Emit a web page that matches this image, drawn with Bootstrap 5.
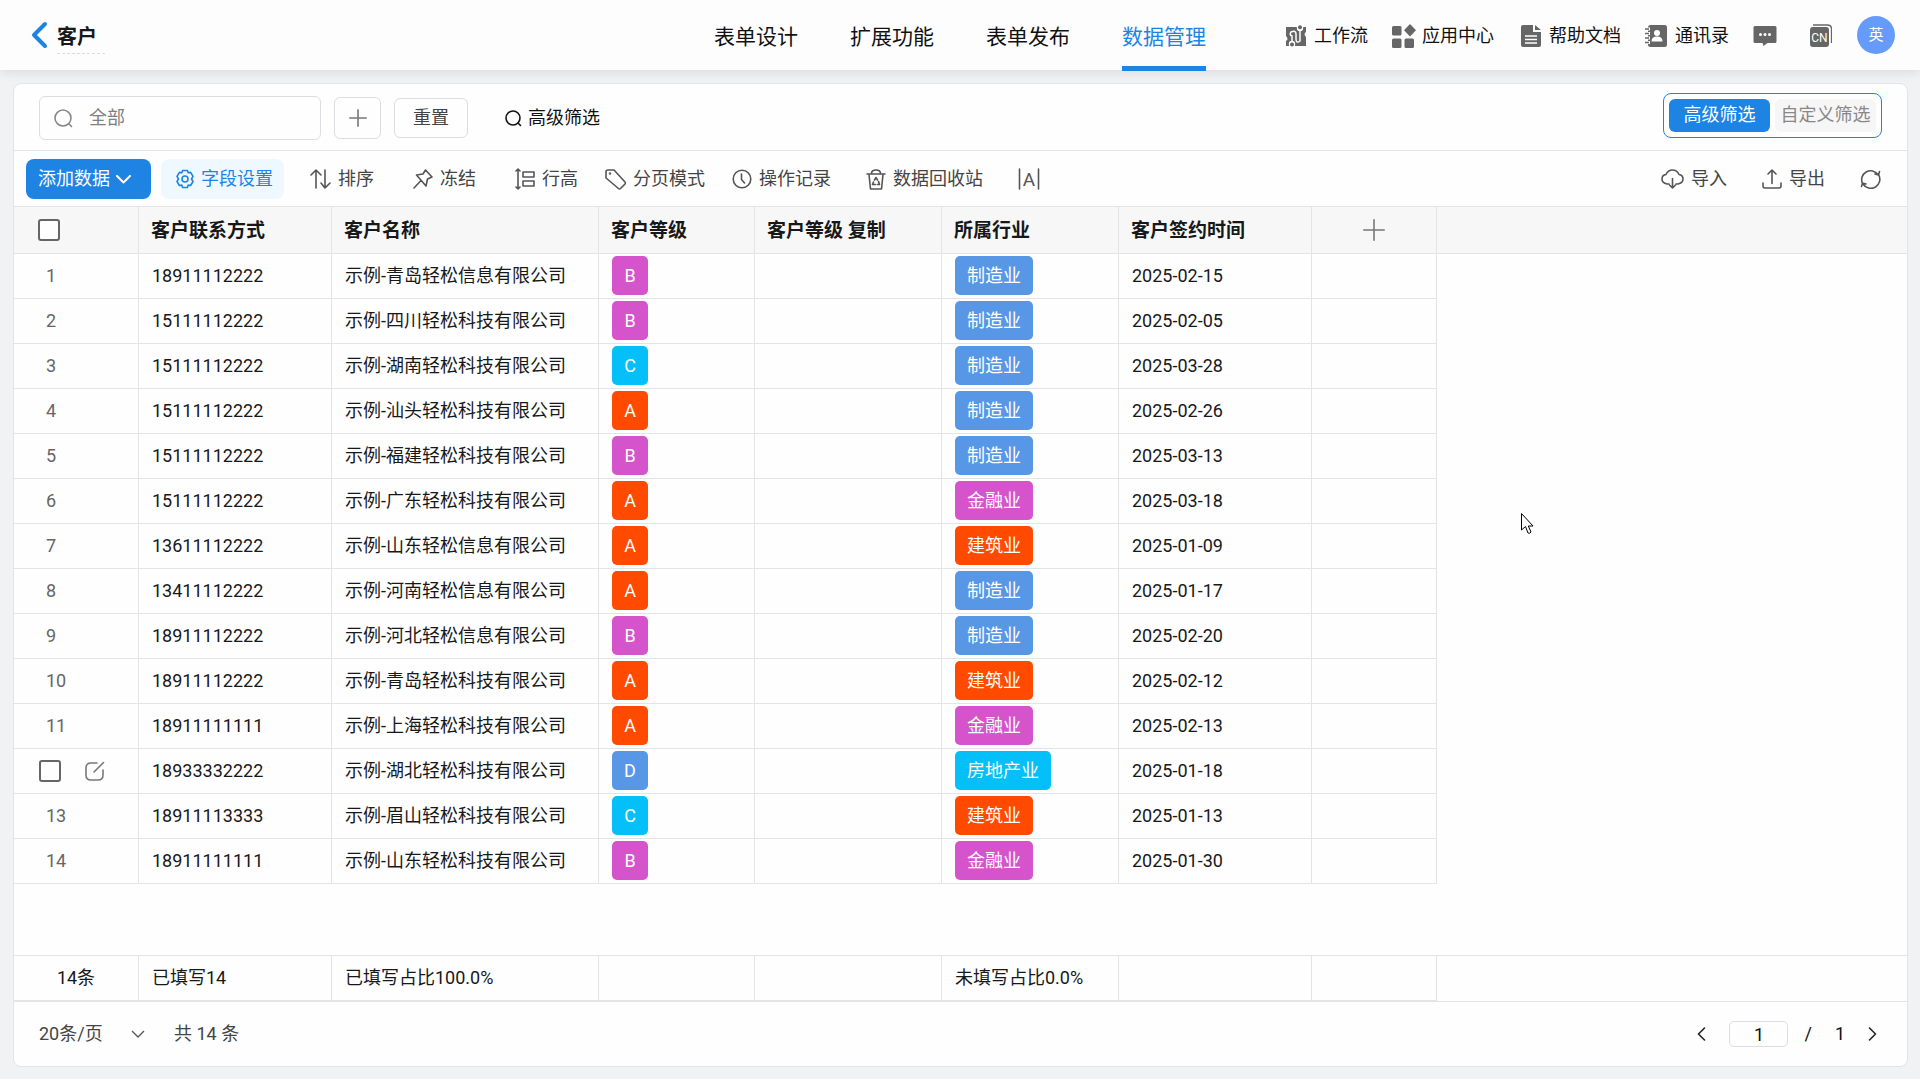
<!DOCTYPE html>
<html lang="zh-CN">
<head>
<meta charset="utf-8">
<meta name="viewport" content="width=device-width, initial-scale=1">
<title>客户 - 数据管理</title>
<link href="https://cdn.jsdelivr.net/npm/bootstrap@5.3.0/dist/css/bootstrap.min.css" rel="stylesheet">
<style>
:root{--brand:#1e84e4;--rule:#e3e4e6;--ink:#17181a;--soft:#444}
body{background:#f1f2f4;color:var(--ink);font-family:Roboto,"Noto Sans CJK SC",sans-serif;font-size:18px;line-height:24px}
button{white-space:nowrap}
svg{display:block;flex:none}
.ln{fill:none;stroke:currentColor;stroke-width:1.6;stroke-linecap:round;stroke-linejoin:round}
.ln-back{stroke-width:4}.ln-caret{stroke-width:2}
.topbar{height:70px;background:#fdfdfe;box-shadow:0 1px 12px rgba(0,0,0,.12);padding:0 25px;position:relative}
.side{flex:1 1 0;min-width:0}
.back-link{color:var(--brand);margin:0 9px 0 6px}
.form-title{font-size:20px;font-weight:700;padding:6px 8px 2px 0;margin:0;line-height:28px;border-bottom:1px dashed #dcdcdc}
.tabs-main{gap:52px}
.tabs-main a{font-size:21px;line-height:30px;padding:22px 0 14px;color:#111;text-decoration:none;border-bottom:5px solid transparent;margin-bottom:-1px;white-space:nowrap}
.tabs-main a.active{color:var(--brand);border-color:var(--brand)}
.quick{color:#111;text-decoration:none;display:flex;align-items:center;gap:8px;white-space:nowrap;padding-top:2px}
.quick.apps{gap:6px;margin-right:27px}
.quick svg,.top-ico svg{color:#666}
.top-ico{border:0;background:none;padding:2px 0 0}
.top-ico.msg{margin-right:33px}.top-ico.lang{margin-right:25px}
.avatar{width:38px;height:38px;border-radius:50%;background:#659bfb;color:#fff;font-size:15px;border:0;padding:0}
.main-area{padding:13px 12px 12px 13px}
.panel{background:#fefefe;border:1px solid var(--rule);border-radius:8px}
.filter-row{padding:9px 25px 10px;min-height:67px;border-bottom:1px solid var(--rule)}
.filter-left{gap:13px;margin-top:3px}
.search-wrap{width:282px;height:44px;border:1px solid #dcdde3;border-radius:6px;padding:0 14px;gap:16px;color:#888}
.search-wrap input{border:0;background:none;outline:0;width:200px;padding:0;color:#111}
.search-wrap input::placeholder{color:#808080;opacity:1}
.btn-line{border:1px solid #dcdde3;border-radius:6px;background:#fefefe;color:var(--soft);height:40px;padding:0 18px}
.btn-plus{width:47px;height:42px;padding:0;color:#777}
.btn-adv{border:0;background:none;padding:0;color:#111;gap:6px;margin-left:24px}
.switcher{border:1px solid var(--brand);border-radius:8px;padding:5px;gap:5px;height:45px}
.switcher button{border:0;border-radius:6px;width:101px;height:33px;padding:0 0 1px;background:#f6f6f6;color:#888}
.switcher button.active{background:var(--brand);color:#fff}
.tool-row{padding:8px 26px 7px 12px;border-bottom:1px solid var(--rule);color:var(--soft)}
.tool{border:0;background:none;color:var(--soft);padding:0;display:flex;align-items:center;gap:7px;height:40px}
.tool-row .tool svg{color:#555}
.tool.add{background:var(--brand);color:#fff;border-radius:8px;width:125px;padding:0 0 0 12px;margin-right:10px;gap:6px}
.tool-row .tool.add svg{color:#fff}
.tool.field{background:#f0f8ff;color:var(--brand);border-radius:8px;width:123px;padding:0 0 0 14px;margin-right:26px;gap:6px}
.tool-row .tool.field svg{color:var(--brand)}
.far{margin-right:39px}.mid{margin-right:35px}.near{margin-right:27px}
.grid{width:100%;table-layout:fixed;border-collapse:separate;border-spacing:0;margin:0}
.grid th,.grid td{border-right:1px solid var(--rule);border-bottom:1px solid var(--rule);padding:0 0 0 13px;height:45px;vertical-align:middle;white-space:nowrap;text-align:left;overflow:hidden}
.grid thead th{background:#f7f7f7;font-size:19px;font-weight:700;height:47px;padding:2px 0 0 12px}
.grid tbody .idx{color:#666;padding:0 0 1px 32px}
.grid thead .idx{padding:0 0 0 24px}
.grid tbody .idx.tick{padding:0 0 0 25px}
.grid td.lv{padding-bottom:2px}
.grid thead .rest{border-right:0}
.grid tbody .rest{border:0}
.tot{border-top:1px solid var(--rule)}
.grid td.count{text-align:center;padding:0}
.tickbox{appearance:none;width:22px;height:22px;border:2px solid #666;border-radius:3px;background:#fefefe;margin:0;display:block}
.tickbox:checked{background:var(--brand);border-color:var(--brand)}
.ico-btn{border:0;background:none;padding:0;color:#777}
.tag{display:block;width:max-content;min-width:36px;height:39px;line-height:39px;border-radius:5px;color:#fff;padding:0 12px;text-align:center}
.t-pink{background:#d553cb}.t-cyan{background:#05c0f8}.t-red{background:#ff4a00}.t-blue{background:#5897e6}
.pager{border-top:1px solid var(--rule);padding:0 30px 0 25px;height:65px;color:var(--soft);gap:27px}
.pager select{appearance:none;border:0;width:108px;padding:0;color:var(--soft);background:url("data:image/svg+xml,%3Csvg xmlns='http://www.w3.org/2000/svg' width='14' height='8'%3E%3Cpath d='M1 1l6 6 6-6' fill='none' stroke='%23555' stroke-width='1.3'/%3E%3C/svg%3E") no-repeat right 2px center}
.pager input{width:59px;height:26px;border:1px solid #dcdde3;border-radius:5px;text-align:center;padding:0;color:#111;background:#fefefe}
.pager-nav{color:#111;gap:23px}
.pager-nav button{border:0;background:none;padding:0;color:#222}
.pager-nav .slash{margin-left:-7px}
.pointer{position:absolute;left:1521px;top:513px;z-index:5}
</style>
<script src="https://cdn.jsdelivr.net/npm/bootstrap@5.3.0/dist/js/bootstrap.bundle.min.js"></script>
</head>
<body>
<div class="d-flex flex-column min-vh-100">
<header class="topbar d-flex align-items-center">
  <div class="side d-flex align-items-center">
    <a class="back-link" href="#" aria-label="返回"><svg width="17" height="28" viewBox="0 0 17 28" class="ln ln-back"><path d="M14 3L3 14l11 11"/></svg></a>
    <h1 class="form-title">客户</h1>
  </div>
  <nav class="tabs-main d-flex">
    <a href="#">表单设计</a><a href="#">扩展功能</a><a href="#">表单发布</a><a href="#" class="active" aria-current="page">数据管理</a>
  </nav>
  <div class="side d-flex align-items-center justify-content-end">
    <a class="quick me-4" href="#"><svg width="20" height="24" viewBox="0 0 20 24"><path fill="currentColor" d="M0 3h20v5q-3 2 0 5v9H0v-5q3-2 0-5z"/><circle cx="14" cy="4" r="3.2" fill="#fdfdfe"/><circle cx="6" cy="20" r="3.2" fill="#fdfdfe"/><circle cx="14" cy="3.300" r="2" fill="currentColor"/><circle cx="6" cy="20.500" r="2" fill="currentColor"/><path d="M6 18v-6q-3-1-1-4 5-2 5 2v5q0 5 4 2V7" fill="none" stroke="#fdfdfe" stroke-width="1.5"/></svg>工作流</a>
    <a class="quick apps" href="#"><svg width="24" height="24" viewBox="0 0 24 24" fill="currentColor"><rect x="0" y="2" width="9.500" height="9.500" rx="1.500"/><rect x="0" y="14.500" width="9.500" height="9.500" rx="1.500"/><rect x="12.500" y="14.500" width="9.500" height="9.500" rx="1.500"/><path d="M18 0l6 6.200-6 6.200-6-6.200z"/></svg>应用中心</a>
    <a class="quick me-4" href="#"><svg width="20" height="22" viewBox="0 0 20 22"><path fill="currentColor" d="M2 0h10v7h8v13q0 2-2 2H2q-2 0-2-2V2q0-2 2-2zM14 0l6 5h-6z"/><path d="M4 11h12M4 14.500h12M4 18h12" stroke="#fff" stroke-width="1.300"/></svg>帮助文档</a>
    <a class="quick me-4" href="#"><svg width="22" height="22" viewBox="0 0 22 22"><rect x="3" width="19" height="22" rx="2.500" fill="currentColor"/><path d="M0 4h5M0 8.500h5M0 13h5M0 17.500h5" stroke="#fff" stroke-width="3"/><path d="M0 4h4M0 8.500h4M0 13h4M0 17.500h4" stroke="currentColor" stroke-width="1.400"/><circle cx="12" cy="8" r="3" fill="#fff"/><path d="M6.500 16.500q0-5 5.500-5t5.500 5z" fill="#fff"/></svg>通讯录</a>
    <button class="top-ico msg" aria-label="消息"><svg width="24" height="22" viewBox="0 0 24 22"><path fill="currentColor" d="M2 1h20q1.500 0 1.500 1.500v14q0 1.500-1.500 1.500h-7.500l-4 3-1-3H2q-1.500 0-1.500-1.500v-14Q.5 1 2 1z"/><g fill="#fff"><circle cx="7.500" cy="9.500" r="1.500"/><circle cx="12" cy="9.500" r="1.500"/><circle cx="16.500" cy="9.500" r="1.500"/></g></svg></button>
    <button class="top-ico lang" aria-label="语言"><svg width="22" height="24" viewBox="0 0 22 24"><rect x="0" y="3" width="19" height="20" rx="3" fill="currentColor"/><path d="M3 1h14.500q4 0 4 4v14" fill="none" stroke="currentColor" stroke-width="1.300"/><text x="9.500" y="18" text-anchor="middle" font-size="12" fill="#fff">CN</text></svg></button>
    <button class="avatar">英</button>
  </div>
</header>

<main class="main-area flex-grow-1 d-flex">
<section class="panel flex-grow-1 d-flex flex-column overflow-hidden">
  <div class="filter-row d-flex align-items-start justify-content-between">
    <div class="filter-left d-flex align-items-center">
      <label class="search-wrap d-flex align-items-center"><svg width="19" height="19" viewBox="0 0 19 19" class="ln"><circle cx="9" cy="9" r="8"/><path d="M15 15l2.500 2.500"/></svg><input type="text" placeholder="全部" aria-label="搜索"></label>
      <button class="btn-line btn-plus d-flex align-items-center justify-content-center" aria-label="添加条件"><svg width="18" height="18" viewBox="0 0 18 18" class="ln"><path d="M9 .8v16.400M.8 9h16.400"/></svg></button>
      <button class="btn-line">重置</button>
      <button class="btn-adv d-flex align-items-center"><svg width="17" height="17" viewBox="0 0 17 17" class="ln"><circle cx="8" cy="8" r="7"/><path d="M13 13l2.500 2.500"/></svg>高级筛选</button>
    </div>
    <div class="switcher d-flex" role="group"><button class="active">高级筛选</button><button>自定义筛选</button></div>
  </div>
  <div class="tool-row d-flex align-items-center">
    <button class="tool add">添加数据<svg width="15" height="9" viewBox="0 0 15 9" class="ln ln-caret"><path d="M1 1l6.500 6.500L14 1"/></svg></button>
    <button class="tool field"><svg width="20" height="20" viewBox="0 0 20 20" class="ln"><path d="M7.600 1.500h4.800l.8 2.300 2.400-.4 2.400 4L16.500 10l1.500 2.500-2.400 4-2.400-.4-.8 2.400H7.600l-.8-2.400-2.400.4-2.400-4L3.500 10 2 7.400l2.400-4 2.400.4z"/><circle cx="10" cy="10" r="3"/></svg>字段设置</button>
    <button class="tool far"><svg width="21" height="20" viewBox="0 0 21 20" class="ln"><path d="M6 19V1L1 6M6 1l5 5M15 1v18l-4-5M15 19l5-5"/></svg>排序</button>
    <button class="tool far"><svg width="20" height="20" viewBox="0 0 20 20" class="ln"><path d="M12.500 1l6.500 7-4.500 2-1.500 7L3.500 6l6.500-1zM8 11.500L1 19"/></svg>冻结</button>
    <button class="tool near"><svg width="20" height="22" viewBox="0 0 20 22" class="ln"><path d="M3 1v20M1 3l2-2 2 2M1 19l2 2 2-2M8 4h11v5H8zM8 13h11v5H8z"/></svg>行高</button>
    <button class="tool near"><svg width="21" height="21" viewBox="0 0 21 21" class="ln"><path d="M1 3q0-2 2-2h6l11 12q1 1 0 2l-4.500 4.500q-1 1-2 0L1 9z"/><circle cx="5" cy="4.500" r=".5"/></svg>分页模式</button>
    <button class="tool mid"><svg width="20" height="20" viewBox="0 0 20 20" class="ln"><circle cx="10" cy="10" r="8.800"/><path d="M9.500 5v5.500l3 3.500"/></svg>操作记录</button>
    <button class="tool mid"><svg width="20" height="21" viewBox="0 0 20 21" class="ln"><path d="M1 5h18M3 5.500L4.500 20h11L17 5.500M5.500 4.500q0-3.500 4.500-3.500t4.500 3.500M8.500 11l1.500-2.500 1.500 2.500M7.500 13L6.500 15.500h3M12.500 12.500l1 3h-2"/></svg>数据回收站</button>
    <button class="tool" aria-label="列宽"><svg width="22" height="22" viewBox="0 0 22 22"><path d="M1.500 1v20M20.500 1v20" class="ln"/><text x="11" y="18" font-size="19" text-anchor="middle" fill="currentColor">A</text></svg></button>
    <button class="tool ms-auto mid"><svg width="23" height="20" viewBox="0 0 23 20" class="ln"><path d="M8 15H6Q1 14 1 10q0-4 4-4.500Q7 1 11.500 1T18 5.500q4 .5 4 4.500 0 4-5 5h-2M11.500 9.500V19M8.500 16l3 3 3-3"/></svg>导入</button>
    <button class="tool mid"><svg width="20" height="20" viewBox="0 0 20 20" class="ln"><path d="M10 14.500V1M6 5l4-4 4 4M1 14v3q0 2 2 2h14q2 0 2-2v-3"/></svg>导出</button>
    <button class="tool" aria-label="刷新"><svg width="21" height="20" viewBox="0 0 21 20" class="ln"><path d="M2.500 14.500A9 9 0 0 1 18 5.500M19.500 2.500L18.500 6 15 5M18.500 5.500A9 9 0 0 1 3 15M1.500 17.500L2.500 14l3.500 1"/></svg></button>
  </div>

  <div class="flex-grow-1">
  <table class="grid">
    <colgroup><col width="125"><col width="193"><col width="267"><col width="156"><col width="187"><col width="177"><col width="193"><col width="125"><col></colgroup>
    <thead><tr><th class="idx"><input type="checkbox" class="tickbox" aria-label="全选"></th><th>客户联系方式</th><th>客户名称</th><th>客户等级</th><th>客户等级 复制</th><th>所属行业</th><th>客户签约时间</th><th class="p-0"><button class="ico-btn mx-auto d-block" aria-label="添加字段"><svg width="22" height="22" viewBox="0 0 22 22" class="ln"><path d="M11 .8v20.400M.8 11h20.400"/></svg></button></th><th class="rest"></th></tr></thead>
    <tbody>
      <tr><td class="idx">1</td><td>18911112222</td><td>示例-青岛轻松信息有限公司</td><td class="lv"><span class="tag t-pink">B</span></td><td></td><td class="lv"><span class="tag t-blue">制造业</span></td><td>2025-02-15</td><td></td><td class="rest"></td></tr>
      <tr><td class="idx">2</td><td>15111112222</td><td>示例-四川轻松科技有限公司</td><td class="lv"><span class="tag t-pink">B</span></td><td></td><td class="lv"><span class="tag t-blue">制造业</span></td><td>2025-02-05</td><td></td><td class="rest"></td></tr>
      <tr><td class="idx">3</td><td>15111112222</td><td>示例-湖南轻松科技有限公司</td><td class="lv"><span class="tag t-cyan">C</span></td><td></td><td class="lv"><span class="tag t-blue">制造业</span></td><td>2025-03-28</td><td></td><td class="rest"></td></tr>
      <tr><td class="idx">4</td><td>15111112222</td><td>示例-汕头轻松科技有限公司</td><td class="lv"><span class="tag t-red">A</span></td><td></td><td class="lv"><span class="tag t-blue">制造业</span></td><td>2025-02-26</td><td></td><td class="rest"></td></tr>
      <tr><td class="idx">5</td><td>15111112222</td><td>示例-福建轻松科技有限公司</td><td class="lv"><span class="tag t-pink">B</span></td><td></td><td class="lv"><span class="tag t-blue">制造业</span></td><td>2025-03-13</td><td></td><td class="rest"></td></tr>
      <tr><td class="idx">6</td><td>15111112222</td><td>示例-广东轻松科技有限公司</td><td class="lv"><span class="tag t-red">A</span></td><td></td><td class="lv"><span class="tag t-pink">金融业</span></td><td>2025-03-18</td><td></td><td class="rest"></td></tr>
      <tr><td class="idx">7</td><td>13611112222</td><td>示例-山东轻松信息有限公司</td><td class="lv"><span class="tag t-red">A</span></td><td></td><td class="lv"><span class="tag t-red">建筑业</span></td><td>2025-01-09</td><td></td><td class="rest"></td></tr>
      <tr><td class="idx">8</td><td>13411112222</td><td>示例-河南轻松信息有限公司</td><td class="lv"><span class="tag t-red">A</span></td><td></td><td class="lv"><span class="tag t-blue">制造业</span></td><td>2025-01-17</td><td></td><td class="rest"></td></tr>
      <tr><td class="idx">9</td><td>18911112222</td><td>示例-河北轻松信息有限公司</td><td class="lv"><span class="tag t-pink">B</span></td><td></td><td class="lv"><span class="tag t-blue">制造业</span></td><td>2025-02-20</td><td></td><td class="rest"></td></tr>
      <tr><td class="idx">10</td><td>18911112222</td><td>示例-青岛轻松科技有限公司</td><td class="lv"><span class="tag t-red">A</span></td><td></td><td class="lv"><span class="tag t-red">建筑业</span></td><td>2025-02-12</td><td></td><td class="rest"></td></tr>
      <tr><td class="idx">11</td><td>18911111111</td><td>示例-上海轻松科技有限公司</td><td class="lv"><span class="tag t-red">A</span></td><td></td><td class="lv"><span class="tag t-pink">金融业</span></td><td>2025-02-13</td><td></td><td class="rest"></td></tr>
      <tr><td class="idx tick"><div class="d-flex align-items-center"><input type="checkbox" class="tickbox me-4" aria-label="选择第12行"><button class="ico-btn" aria-label="编辑"><svg width="20" height="20" viewBox="0 0 20 20" class="ln"><path d="M12 2H6Q1 2 1 7v7q0 5 5 5h7q5 0 5-5V9M9 11l9.500-9.500"/></svg></button></div></td><td>18933332222</td><td>示例-湖北轻松科技有限公司</td><td class="lv"><span class="tag t-blue">D</span></td><td></td><td class="lv"><span class="tag t-cyan">房地产业</span></td><td>2025-01-18</td><td></td><td class="rest"></td></tr>
      <tr><td class="idx">13</td><td>18911113333</td><td>示例-眉山轻松科技有限公司</td><td class="lv"><span class="tag t-cyan">C</span></td><td></td><td class="lv"><span class="tag t-red">建筑业</span></td><td>2025-01-13</td><td></td><td class="rest"></td></tr>
      <tr><td class="idx">14</td><td>18911111111</td><td>示例-山东轻松科技有限公司</td><td class="lv"><span class="tag t-pink">B</span></td><td></td><td class="lv"><span class="tag t-pink">金融业</span></td><td>2025-01-30</td><td></td><td class="rest"></td></tr>
    </tbody>
  </table>
  </div>
  <div class="tot">
  <table class="grid">
    <colgroup><col width="125"><col width="193"><col width="267"><col width="156"><col width="187"><col width="177"><col width="193"><col width="125"><col></colgroup>
    <tbody><tr><td class="count">14条</td><td>已填写14</td><td>已填写占比100.0%</td><td></td><td></td><td>未填写占比0.0%</td><td></td><td></td><td class="rest"></td></tr></tbody>
  </table>
  </div>
  <div class="pager d-flex align-items-center">
    <select aria-label="每页条数"><option>20条/页</option></select>
    <span>共 14 条</span>
    <div class="pager-nav ms-auto d-flex align-items-center">
      <button aria-label="上一页"><svg width="9" height="14" viewBox="0 0 9 14" class="ln"><path d="M7.500 1l-6 6 6 6"/></svg></button>
      <input type="text" value="1" aria-label="页码"><span class="slash">/</span><span>1</span>
      <button aria-label="下一页"><svg width="9" height="14" viewBox="0 0 9 14" class="ln"><path d="M1.500 1l6 6-6 6"/></svg></button>
    </div>
  </div>
</section>
</main>
</div>
<svg class="pointer" width="13" height="22" viewBox="0 0 13 22"><path d="M.5 .5v16.500l4-3.500 2.500 6.500q1.500 1 3-1l-2.700-6H12z" fill="#fff" stroke="#000"/></svg>
</body>
</html>
